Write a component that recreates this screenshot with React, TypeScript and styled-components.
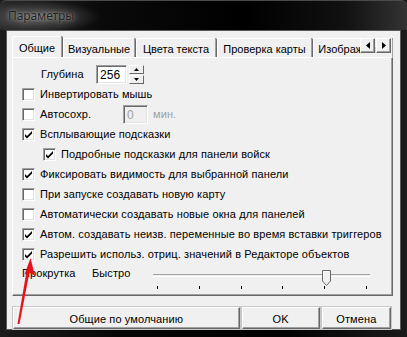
import React from 'react';
import styled, { createGlobalStyle } from 'styled-components';

const GlobalStyle = createGlobalStyle`
  html, body {
    margin: 0;
    padding: 0;
    background: #000;
  }
  body {
    font-family: "Liberation Sans", Arial, sans-serif;
    font-size: 11px;
    color: #000;
  }
`;

const Window = styled.div`
  position: relative;
  width: 407px;
  height: 337px;
  display: flex;
  flex-direction: column;
  background: linear-gradient(90deg, #1c1c1c 0%, #060606 30%, #020202 70%, #1a1a1a 100%);
  overflow: hidden;
`;

const TitleBar = styled.div`
  height: 30px;
  flex-shrink: 0;
  display: flex;
  align-items: center;
  padding-left: 8px;
  border-top: 1px solid #4a4a4a;
  border-radius: 6px 6px 0 0;
  box-sizing: border-box;
  background:
    radial-gradient(ellipse 60px 16px at 40px 16px, rgba(140, 140, 140, 0.55), rgba(90, 90, 90, 0) 100%),
    linear-gradient(90deg, #2a2a2a 0%, #0a0a0a 25%, #000 60%, #111 85%, #333 100%);
`;

const Title = styled.span`
  font-family: "Noto Sans", "Open Sans", sans-serif;
  font-size: 12px;
  color: #1e1e1e;
  text-shadow: 0 0 6px rgba(255, 255, 255, 0.5), 0 0 2px rgba(255, 255, 255, 0.4);
  letter-spacing: -0.1px;
`;

const Client = styled.div`
  flex: 1;
  margin: 0 6px 7px 6px;
  background: #f0f0f0;
  border: 1px solid #5a5a5a;
  display: flex;
  flex-direction: column;
  padding: 5px 7px 0 5px;
`;

const TabArea = styled.div`
  position: relative;
`;

const TabStrip = styled.div`
  display: flex;
  align-items: flex-end;
  height: 21px;
  position: relative;
  z-index: 1;
  overflow: hidden;
`;

const Tab = styled.div<{ $w: number; $active?: boolean }>`
  flex-shrink: 0;
  box-sizing: border-box;
  width: ${p => p.$w}px;
  height: ${p => (p.$active ? 22 : 19)}px;
  margin-bottom: ${p => (p.$active ? -1 : 0)}px;
  background: #f0f0f0;
  border-left: 1px solid #fff;
  border-top: 1px solid #fff;
  border-right: 1px solid #a0a0a0;
  box-shadow: 1px 0 0 #696969;
  border-radius: 2px 2px 0 0;
  display: flex;
  align-items: center;
  justify-content: center;
  padding-top: ${p => (p.$active ? 0 : 1)}px;
  white-space: nowrap;
  margin-right: 1px;
`;

const ScrollArrows = styled.div`
  position: absolute;
  top: 2px;
  right: 2px;
  display: flex;
  gap: 1px;
  z-index: 2;
`;

const ArrowButton = styled.div`
  width: 15px;
  height: 15px;
  box-sizing: border-box;
  background: #f0f0f0;
  border-left: 1px solid #fff;
  border-top: 1px solid #fff;
  border-right: 1px solid #696969;
  border-bottom: 1px solid #696969;
  box-shadow: inset -1px -1px 0 #a0a0a0;
  display: flex;
  align-items: center;
  justify-content: center;
`;

const Panel = styled.div`
  height: 239px;
  box-sizing: border-box;
  border-left: 1px solid #fff;
  border-top: 1px solid #fff;
  border-right: 1px solid #696969;
  border-bottom: 1px solid #696969;
  box-shadow: inset -1px -1px 0 #a0a0a0;
  padding: 6px 0 0 9px;
  display: flex;
  flex-direction: column;
  letter-spacing: 0.1px;
`;

const Row = styled.div<{ $indent?: number }>`
  height: 20px;
  display: flex;
  align-items: center;
  padding-left: ${p => p.$indent ?? 0}px;
  white-space: nowrap;
`;

const SliderRow = styled(Row)`
  height: 26px;
  align-items: flex-start;
  padding-top: 3px;
`;

const Label = styled.span<{ $w?: number; $muted?: boolean; $gap?: number }>`
  display: inline-block;
  width: ${p => (p.$w ? `${p.$w}px` : 'auto')};
  margin-left: ${p => p.$gap ?? 0}px;
  color: ${p => (p.$muted ? '#a0a0a0' : '#000')};
`;

const Field = styled.div<{ $w: number; $disabled?: boolean }>`
  width: ${p => p.$w}px;
  height: 19px;
  box-sizing: border-box;
  background: ${p => (p.$disabled ? '#f0f0f0' : '#fff')};
  color: ${p => (p.$disabled ? '#a0a0a0' : '#000')};
  border: 1px solid #a0a0a0;
  border-right-color: #fff;
  border-bottom-color: #fff;
  box-shadow: inset 1px 1px 0 #696969, inset -1px -1px 0 #e3e3e3;
  padding: 2px 0 0 3px;
  font-size: 12px;
`;

const Spinner = styled.div`
  display: flex;
  flex-direction: column;
  margin-left: 2px;
  height: 19px;
`;

const SpinButton = styled.div`
  width: 15px;
  height: 9px;
  box-sizing: border-box;
  background: #f0f0f0;
  border-left: 1px solid #fff;
  border-top: 1px solid #fff;
  border-right: 1px solid #696969;
  border-bottom: 1px solid #696969;
  display: flex;
  align-items: center;
  justify-content: center;
  & + & {
    margin-top: 1px;
  }
`;

const Box = styled.div`
  width: 13px;
  height: 13px;
  flex-shrink: 0;
  box-sizing: border-box;
  background: #fff;
  border: 1px solid #a0a0a0;
  border-right-color: #fff;
  border-bottom-color: #fff;
  box-shadow: inset 1px 1px 0 #696969, inset -1px -1px 0 #e3e3e3;
  margin-right: 5px;
  position: relative;
`;

const Slider = styled.div`
  position: relative;
  width: 217px;
  height: 26px;
`;

const Track = styled.div`
  position: absolute;
  left: 0;
  right: 0;
  top: 7px;
  height: 3px;
  border-top: 1px solid #a0a0a0;
  border-bottom: 1px solid #fff;
  box-sizing: border-box;
`;

const Ticks = styled.div`
  position: absolute;
  left: 4px;
  right: 3px;
  top: 19px;
  display: flex;
  justify-content: space-between;
`;

const Tick = styled.span`
  width: 1px;
  height: 3px;
  background: #000;
`;

const Thumb = styled.svg`
  position: absolute;
  left: 169px;
  top: 3px;
`;

const ButtonRow = styled.div`
  display: flex;
  margin-top: 11px;
  padding-left: 1px;
`;

const Button = styled.div<{ $w: number; $push?: boolean }>`
  width: ${p => p.$w}px;
  height: 22px;
  box-sizing: border-box;
  margin-left: ${p => (p.$push ? 'auto' : '0')};
  margin-right: 2px;
  background: #f0f0f0;
  border-left: 1px solid #fff;
  border-top: 1px solid #fff;
  border-right: 1px solid #696969;
  border-bottom: 1px solid #696969;
  box-shadow: inset -1px -1px 0 #a0a0a0, 0 0 0 1px #c8c8c8;
  display: flex;
  align-items: center;
  justify-content: center;
  padding-top: 1px;
  letter-spacing: 0.1px;
`;

const Annotation = styled.svg`
  position: absolute;
  left: 0;
  top: 0;
  pointer-events: none;
`;

const Check = ({ on }: { on?: boolean }) => (
  <Box>
    {on && (
      <svg width="11" height="11" viewBox="0 0 11 11" style={{ position: 'absolute', left: 0, top: 0 }}>
        <path d="M2 5 L4 7 L9 2 L9 4.5 L4 9.5 L2 7.5 Z" fill="#000" />
      </svg>
    )}
  </Box>
);

const CheckRow = ({ on, text, indent }: { on?: boolean; text: string; indent?: number }) => (
  <Row $indent={indent}>
    <Check on={on} />
    <Label>{text}</Label>
  </Row>
);

const tabs = [
  { name: 'Общие', w: 50, active: true },
  { name: 'Визуальные', w: 72 },
  { name: 'Цвета текста', w: 80 },
  { name: 'Проверка карты', w: 95 },
  { name: 'Изображение', w: 80 },
];

export default function App() {
  return (
    <>
      <GlobalStyle />
      <Window>
        <TitleBar>
          <Title>Параметры</Title>
        </TitleBar>
        <Client>
          <TabArea>
            <TabStrip>
              {tabs.map(t => (
                <Tab key={t.name} $w={t.w} $active={t.active}>
                  {t.name}
                </Tab>
              ))}
            </TabStrip>
            <ScrollArrows>
              <ArrowButton>
                <svg width="4" height="7" viewBox="0 0 4 7">
                  <path d="M4 0 L0 3.5 L4 7 Z" fill="#000" />
                </svg>
              </ArrowButton>
              <ArrowButton>
                <svg width="4" height="7" viewBox="0 0 4 7">
                  <path d="M0 0 L4 3.5 L0 7 Z" fill="#000" />
                </svg>
              </ArrowButton>
            </ScrollArrows>
            <Panel>
              <Row $indent={19}>
                <Label $w={55}>Глубина</Label>
                <Field $w={31}>256</Field>
                <Spinner>
                  <SpinButton>
                    <svg width="5" height="3" viewBox="0 0 5 3">
                      <path d="M2.5 0 L5 3 L0 3 Z" fill="#000" />
                    </svg>
                  </SpinButton>
                  <SpinButton>
                    <svg width="5" height="3" viewBox="0 0 5 3">
                      <path d="M0 0 L5 0 L2.5 3 Z" fill="#000" />
                    </svg>
                  </SpinButton>
                </Spinner>
              </Row>
              <CheckRow text="Инвертировать мышь" />
              <Row>
                <Check />
                <Label $w={83}>Автосохр.</Label>
                <Field $w={25} $disabled>0</Field>
                <Label $muted $gap={5}>мин.</Label>
              </Row>
              <CheckRow on text="Всплывающие подсказки" />
              <CheckRow on indent={21} text="Подробные подсказки для панели войск" />
              <CheckRow on text="Фиксировать видимость для выбранной панели" />
              <CheckRow text="При запуске создавать новую карту" />
              <CheckRow text="Автоматически создавать новые окна для панелей" />
              <CheckRow on text="Автом. создавать неизв. переменные во время вставки триггеров" />
              <CheckRow on text="Разрешить использ. отриц. значений в Редакторе объектов" />
              <SliderRow>
                <Label $w={70}>Прокрутка</Label>
                <Label $w={61}>Быстро</Label>
                <Slider>
                  <Track />
                  <Thumb width="9" height="16" viewBox="0 0 9 16">
                    <path d="M0.5 0.5 H8.5 V11 L4.5 15.5 L0.5 11 Z" fill="#f0f0f0" stroke="#696969" />
                    <path d="M1.5 11 V1.5 H7.5" fill="none" stroke="#fff" />
                  </Thumb>
                  <Ticks>
                    {[0, 1, 2, 3, 4, 5].map(i => (
                      <Tick key={i} />
                    ))}
                  </Ticks>
                </Slider>
              </SliderRow>
            </Panel>
          </TabArea>
          <ButtonRow>
            <Button $w={229}>Общие по умолчанию</Button>
            <Button $w={79} $push>OK</Button>
            <Button $w={70}>Отмена</Button>
          </ButtonRow>
        </Client>
        <Annotation width="407" height="337" viewBox="0 0 407 337">
          <path d="M17.5 324 L19.5 324 L29.5 272 L26.5 271.5 Z" fill="#e5141c" />
          <path d="M30.5 258 L35 276 L30 273 L24.5 274.5 Z" fill="#e5141c" />
        </Annotation>
      </Window>
    </>
  );
}
